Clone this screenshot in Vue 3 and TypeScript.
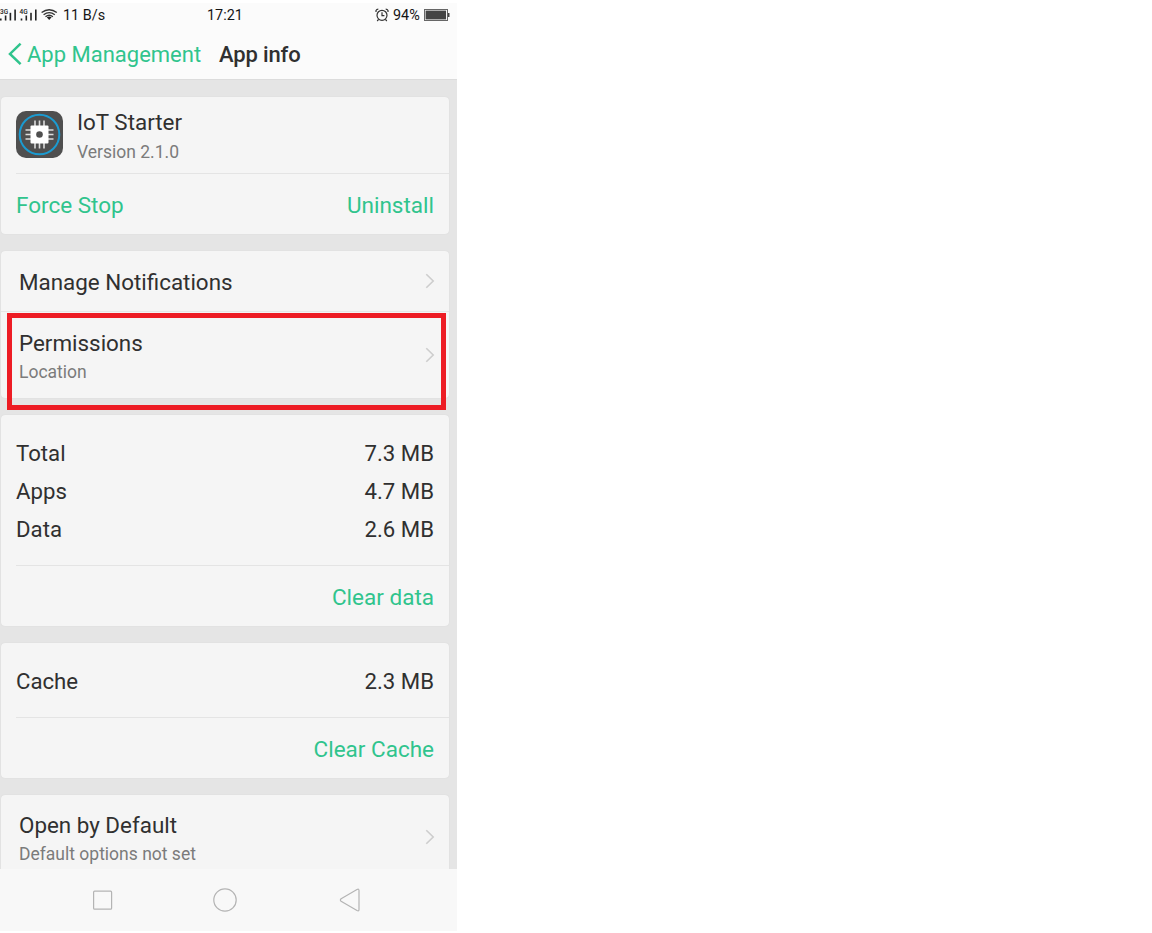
<script setup lang="ts">
interface UsageRow {
  label: string
  value: string
}

const usage: UsageRow[] = [
  { label: 'Total', value: '7.3 MB' },
  { label: 'Apps', value: '4.7 MB' },
  { label: 'Data', value: '2.6 MB' },
]
</script>

<template>
  <div class="phone">
    <header class="top">
      <div class="status">
        <svg class="signals" width="61" height="22" viewBox="0 0 61 22">
          <g fill="#222">
            <text x="0" y="10.5" class="net">3G</text>
            <text x="19.5" y="10.5" class="net">4G</text>
            <rect x="0" y="15.5" width="1.6" height="2" />
            <rect x="4.8" y="12.5" width="1.6" height="5" />
            <rect x="9.6" y="9.8" width="1.6" height="7.7" />
            <rect x="14.3" y="6.5" width="1.6" height="11" />
            <rect x="20.7" y="15.5" width="1.6" height="2" />
            <rect x="25.5" y="12.5" width="1.6" height="5" />
            <rect x="30.2" y="9.8" width="1.6" height="7.7" />
            <rect x="35" y="6.5" width="1.6" height="11" />
            <path d="M46.8 14.3q2.4-1.8 4.8 0l-2.4 2.7z" />
          </g>
          <g fill="none" stroke="#333" stroke-width="1.4">
            <path d="M41.6 9.5q7.6-5.6 15.2 0" />
            <path d="M43.6 11.7q5.6-4.2 11.2 0" />
            <path d="M45.5 13.7q3.7-2.8 7.4 0" />
          </g>
        </svg>
        <span class="rate">11 B/s</span>
        <span class="clock">17:21</span>
        <svg class="alarm" width="14" height="14" viewBox="0 0 14 14" fill="none" stroke="#333" stroke-width="1.2">
          <circle cx="7" cy="7.3" r="5" />
          <path d="M7 4.3v3.3h2.4M1 4V2.5Q1.6 1.2 3.3 1.1M13 4V2.5Q12.4 1.2 10.7 1.1M3.6 11.3 2.2 13M10.4 11.3l1.4 1.7" />
        </svg>
        <span class="percent">94%</span>
        <svg class="battery" width="26" height="12" viewBox="0 0 26 12">
          <rect x=".5" y=".5" width="23" height="11" fill="#f5f5f5" stroke="#666" />
          <rect x="1.6" y="1.6" width="20.4" height="8.8" fill="#444" />
          <rect x="24" y="4" width="1.5" height="4" fill="#444" />
        </svg>
      </div>
      <div class="bar">
        <svg width="15" height="24" viewBox="0 0 15 24" fill="none" stroke="#30c48d" stroke-width="2.5">
          <path d="M13.6 1.6 3 11.9l10.6 10.3" />
        </svg>
        <span class="back">App Management</span>
        <span class="title">App info</span>
      </div>
    </header>

    <main class="content">
      <section class="card app">
        <div class="identity">
          <svg width="47" height="47" viewBox="0 0 47 47">
            <rect width="47" height="47" rx="10" fill="#4f4f4f" />
            <circle cx="23.5" cy="23.5" r="19.8" fill="none" stroke="#1b9bd1" stroke-width="2" />
            <path
              d="M19 9.5v28M23.5 9.5v28M28 9.5v28M9.5 19h28M9.5 23.5h28M9.5 28h28"
              stroke="#ddd"
              stroke-width="1.6"
            />
            <rect x="14.5" y="14.5" width="18" height="18" rx="1" fill="#fff" />
            <circle cx="23.5" cy="23.5" r="3.3" fill="#4f4f4f" />
          </svg>
          <div class="names">
            <div class="name">IoT Starter</div>
            <div class="small version">Version 2.1.0</div>
          </div>
        </div>
        <div class="actions">
          <span>Force Stop</span>
          <span>Uninstall</span>
        </div>
      </section>

      <section class="card links">
        <div class="link notifications">
          <span>Manage Notifications</span>
          <svg class="chevron" width="10" height="16" viewBox="0 0 10 16"><path d="M1.3 1.3 8.2 8l-6.9 6.7" /></svg>
        </div>
        <div class="link permissions">
          <div class="labels">
            <div class="row-title">Permissions</div>
            <div class="small">Location</div>
          </div>
          <svg class="chevron" width="10" height="16" viewBox="0 0 10 16"><path d="M1.3 1.3 8.2 8l-6.9 6.7" /></svg>
        </div>
        <div class="highlight"></div>
      </section>

      <section class="card storage">
        <div class="rows">
          <div v-for="row in usage" :key="row.label" class="row">
            <span>{{ row.label }}</span>
            <span class="value">{{ row.value }}</span>
          </div>
        </div>
        <div class="actions end">Clear data</div>
      </section>

      <section class="card cache">
        <div class="row cache-row">
          <span>Cache</span>
          <span class="value">2.3 MB</span>
        </div>
        <div class="actions end">Clear Cache</div>
      </section>

      <section class="card defaults">
        <div class="link open">
          <div class="labels">
            <div class="row-title">Open by Default</div>
            <div class="small">Default options not set</div>
          </div>
          <svg class="chevron" width="10" height="16" viewBox="0 0 10 16"><path d="M1.3 1.3 8.2 8l-6.9 6.7" /></svg>
        </div>
      </section>
    </main>

    <nav class="nav">
      <svg width="457" height="62" viewBox="0 0 457 62" fill="none" stroke="#b4b4b4" stroke-width="1.2">
        <rect x="93.6" y="22.2" width="18" height="18" rx="1" />
        <circle cx="225" cy="31" r="11.2" />
        <path d="M341.1 29.7 357 20.5q2-1 2 1v19q0 2-2 1l-15.9-9.2q-1.4-1.3 0-2.6z" />
      </svg>
    </nav>
  </div>
</template>

<style>
body {
  margin: 0;
  background: #fff;
}
</style>

<style scoped>
.phone {
  box-sizing: border-box;
  width: 457px;
  height: 928px;
  margin-top: 3px;
  overflow: hidden;
  display: flex;
  flex-direction: column;
  background: #e5e5e5;
  color: #303030;
  font-family: Roboto, "Liberation Sans", sans-serif;
  font-size: 22.4px;
  line-height: 28px;
  white-space: nowrap;
}
.phone svg {
  display: block;
  flex: none;
}
.top {
  height: 76px;
  background: #fbfbfb;
  border-bottom: 1px solid #dcdcdc;
}
.status {
  height: 24px;
  display: flex;
  align-items: center;
  font-size: 14.4px;
  line-height: 24px;
  color: #151515;
}
.status span {
  padding-top: 1px;
}
.signals {
  align-self: flex-start;
}
.net {
  font-size: 6.5px;
  font-weight: 500;
}
.status .rate {
  width: 144px;
  padding-left: 2px;
}
.alarm {
  margin-left: auto;
}
.percent {
  width: 27px;
  margin: 0 4px 0 4px;
}
.battery {
  margin-right: 7px;
}
.bar {
  height: 52px;
  padding: 3px 0 0 7px;
  box-sizing: border-box;
  display: flex;
  align-items: center;
}
.bar svg {
  margin-top: -2px;
}
.back {
  width: 197px;
  padding-left: 5px;
  box-sizing: border-box;
  color: #30c48d;
  font-size: 22px;
}
.title {
  font-size: 22px;
  font-weight: 500;
  letter-spacing: -0.15px;
}
.content {
  flex: 1;
  min-height: 0;
  padding: 17px 8px 0 1px;
  overflow: hidden;
}
.card {
  box-sizing: border-box;
  margin-bottom: 17px;
  border-radius: 4px;
  background: #f5f5f5;
  box-shadow: 0 0 1px #cdcdcd;
}
.app {
  height: 137px;
}
.identity {
  box-sizing: border-box;
  height: 77px;
  margin-left: 15px;
  padding-top: 11px;
  display: flex;
  border-bottom: 1px solid #e4e4e4;
}
.identity svg {
  margin-top: 3px;
}
.names {
  margin-left: 14px;
}
.name {
  height: 30px;
}
.small {
  color: #7b7b7b;
  font-size: 17.5px;
  line-height: 28px;
}
.actions {
  height: 62px;
  padding: 0 15px;
  display: flex;
  align-items: center;
  justify-content: space-between;
  color: #30c48d;
  font-size: 22.5px;
}
.end {
  justify-content: flex-end;
}
.links {
  position: relative;
  height: 147px;
}
.link {
  box-sizing: border-box;
  padding: 0 14px 0 18px;
  display: flex;
  align-items: center;
  justify-content: space-between;
}
.notifications span {
  padding-top: 2px;
}
.chevron {
  fill: none;
  stroke: #cdcdcd;
  stroke-width: 1.6;
}
.notifications {
  height: 61px;
  border-bottom: 1px solid #e6e6e6;
}
.permissions {
  height: 86px;
}
.permissions .labels {
  padding-top: 5px;
}
.row-title {
  height: 29px;
}
.highlight {
  position: absolute;
  left: 6px;
  top: 62px;
  box-sizing: border-box;
  width: 439px;
  height: 97px;
  border: 5px solid #ed1c24;
}
.storage {
  height: 211px;
}
.rows {
  box-sizing: border-box;
  height: 151px;
  margin-left: 15px;
  padding-top: 19px;
  border-bottom: 1px solid #e4e4e4;
}
.row {
  height: 38px;
  padding-right: 15px;
  display: flex;
  align-items: center;
  justify-content: space-between;
  font-size: 22.2px;
}
.cache {
  height: 135px;
}
.cache-row {
  box-sizing: border-box;
  height: 75px;
  padding-top: 2px;
  margin-left: 15px;
  border-bottom: 1px solid #e4e4e4;
}
.defaults {
  height: 100px;
}
.open {
  height: 84px;
}
.open .labels {
  padding-top: 5px;
}
.nav {
  height: 62px;
  background: #f8f8f8;
}
</style>
